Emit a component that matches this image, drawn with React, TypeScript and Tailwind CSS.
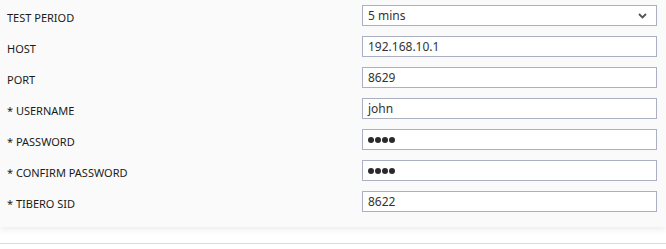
import React from 'react'

const fields = [
  { label: 'TEST PERIOD', value: '5 mins', type: 'select' },
  { label: 'HOST', value: '192.168.10.1', type: 'text' },
  { label: 'PORT', value: '8629', type: 'text' },
  { label: '* USERNAME', value: 'john', type: 'text' },
  { label: '* PASSWORD', value: 'abcd', type: 'password' },
  { label: '* CONFIRM PASSWORD', value: 'abcd', type: 'password' },
  { label: '* TIBERO SID', value: '8622', type: 'text' },
]

function Chevron() {
  return (
    <svg width="9" height="6" viewBox="0 0 9 6" className="text-[#555]">
      <path d="M1 1l3.5 3.5L8 1" fill="none" stroke="currentColor" strokeWidth="1.8" />
    </svg>
  )
}

export default function App() {
  return (
    <div className="w-[666px] h-[249px] bg-white font-['Noto_Sans','Open_Sans',sans-serif] overflow-hidden">
      <div className="bg-[#fafafa] pt-[5px] pb-[15px] shadow-[0_3px_6px_rgba(0,0,0,0.07)] flex flex-col gap-[10px]">
        {fields.map((f) => (
          <div key={f.label} className="flex items-center h-[21px]">
            <div className="w-[362px] pl-[7px] pt-[3px] text-[11px] text-[#1a1a1a] leading-none">{f.label}</div>
            <div className="w-[295px] h-[21px] border border-[#aab0c1] bg-white flex items-center px-[5px] text-[12px] text-[#333] leading-none">
              {f.type === 'password' ? (
                <span className="flex gap-[1px]">
                  {[0, 1, 2, 3].map((i) => (
                    <span key={i} className="w-[6px] h-[6px] rounded-full bg-[#2a2a2a] block" />
                  ))}
                </span>
              ) : (
                <span className="flex-1">{f.value}</span>
              )}
              {f.type === 'select' && (
                <span className="pr-[4px]">
                  <Chevron />
                </span>
              )}
            </div>
          </div>
        ))}
      </div>
      <div className="mt-[16px] border-t border-[#dadada]" />
    </div>
  )
}
